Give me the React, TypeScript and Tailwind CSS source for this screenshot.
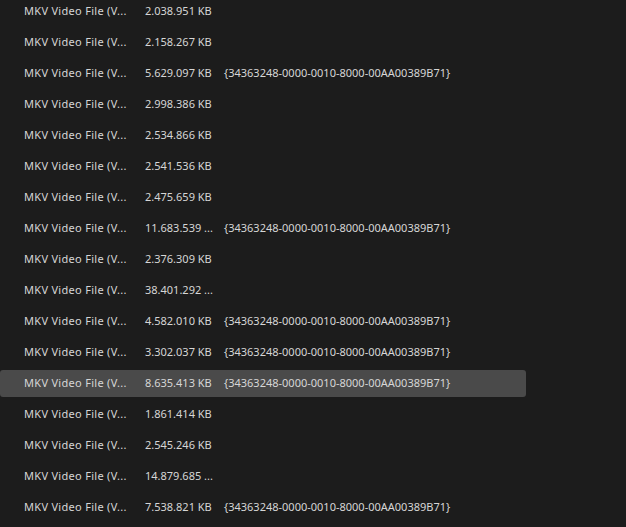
import React from "react";

const rows: [string, string][] = [
  ["2.038.951 KB", ""],
  ["2.158.267 KB", ""],
  ["5.629.097 KB", "g"],
  ["2.998.386 KB", ""],
  ["2.534.866 KB", ""],
  ["2.541.536 KB", ""],
  ["2.475.659 KB", ""],
  ["11.683.539 ...", "g"],
  ["2.376.309 KB", ""],
  ["38.401.292 ...", ""],
  ["4.582.010 KB", "g"],
  ["3.302.037 KB", "g"],
  ["8.635.413 KB", "g"],
  ["1.861.414 KB", ""],
  ["2.545.246 KB", ""],
  ["14.879.685 ...", ""],
  ["7.538.821 KB", "g"],
];

export default function App() {
  return (
    <div
      className="w-[626px] h-[527px] overflow-hidden bg-[#1c1c1c] text-[#d6d6d6] text-[11px]"
      style={{ fontFamily: '"Segoe UI", "Noto Sans", sans-serif' }}
    >
      <div className="-mt-[2px] flex flex-col gap-[4px]">
        {rows.map(([size, g], i) => (
          <div
            key={i}
            className={
              "flex items-center h-[27px] w-[526px] rounded-[3px] whitespace-nowrap " +
              (i === 12 ? "bg-[#4a4a4a]" : "")
            }
          >
            <div className="w-[145px] pl-[24px] shrink-0 tracking-[0.3px]">MKV Video File (V...</div>
            <div className="w-[79px] shrink-0">{size}</div>
            <div>{g ? "{34363248-0000-0010-8000-00AA00389B71}" : ""}</div>
          </div>
        ))}
      </div>
    </div>
  );
}
